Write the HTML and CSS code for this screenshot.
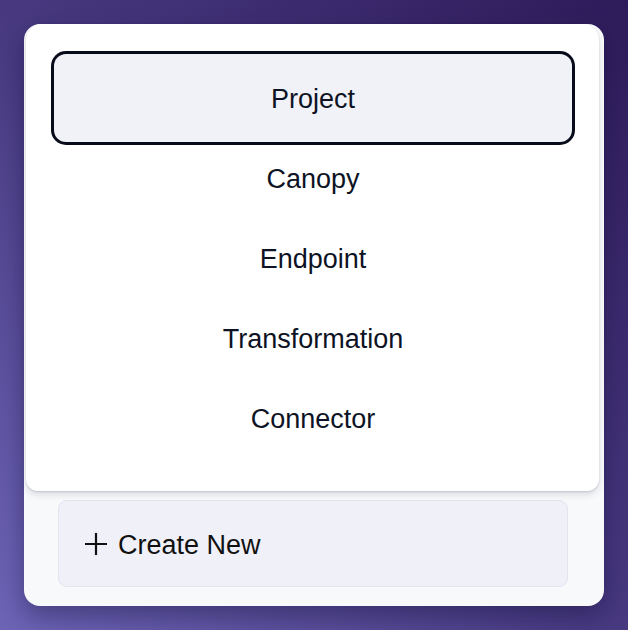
FILE: index.html
```html
<!DOCTYPE html>
<html>
<head>
<meta charset="utf-8">
<link rel="stylesheet" href="styles.css">
</head>
<body>
<div class="card">
  <div class="menu" role="listbox">
    <div class="item active">Project</div>
    <div class="item">Canopy</div>
    <div class="item">Endpoint</div>
    <div class="item">Transformation</div>
    <div class="item">Connector</div>
  </div>
  <button class="create">
    <svg class="plus" width="24" height="24" viewBox="0 0 24 24"><path d="M12 1v22M1 12h22" stroke="#111" stroke-width="2.2" fill="none"/></svg>
    <span>Create New</span>
  </button>
</div>
</body>
</html>
```
FILE: styles.css
```css
html, body {
  margin: 0;
  height: 630px;
}
body {
  padding: 24px;
  box-sizing: border-box;
  background: linear-gradient(to top right, #6d64b6 0%, #4a3c84 45%, #2e1b5a 100%);
  font-family: "Liberation Sans", Arial, sans-serif;
}
.card {
  position: relative;
  width: 580px;
  height: 582px;
  box-sizing: border-box;
  background: #f8f9fa;
  border-radius: 16px;
  box-shadow: 0 10px 24px rgba(10, 5, 40, 0.35);
  display: flex;
  flex-direction: column;
  justify-content: flex-end;
  padding: 0 36px 19px 34px;
}
.menu {
  position: absolute;
  top: 0;
  left: 2px;
  width: 573px;
  box-sizing: border-box;
  padding: 34px 31px 33px 32px;
  background: #fff;
  border-radius: 16px 16px 12px 12px;
  box-shadow: 0 4px 6px rgba(30, 40, 70, 0.12), 0 1px 2px rgba(30, 40, 70, 0.15);
  display: flex;
  flex-direction: column;
  z-index: 2;
}
.item {
  height: 80px;
  box-sizing: border-box;
  padding-top: 2px;
  display: flex;
  align-items: center;
  justify-content: center;
  font-size: 27px;
  color: #0d1324;
}
.item.active {
  background: #f0f2f7;
  border-radius: 8px;
  box-shadow: 0 0 0 4px #f0f2f7, 0 0 0 7px #070b1a;
}
.create {
  height: 87px;
  box-sizing: border-box;
  width: 100%;
  display: flex;
  align-items: center;
  gap: 10px;
  padding: 3px 0 0 25px;
  background: #eff0f8;
  border: 1px solid #e0e5ef;
  border-radius: 9px;
  font-family: "Liberation Sans", Arial, sans-serif;
  font-size: 27px;
  color: #111;
  cursor: pointer;
}
.plus {
  display: block;
  flex: none;
  margin-top: -3px;
}
```
